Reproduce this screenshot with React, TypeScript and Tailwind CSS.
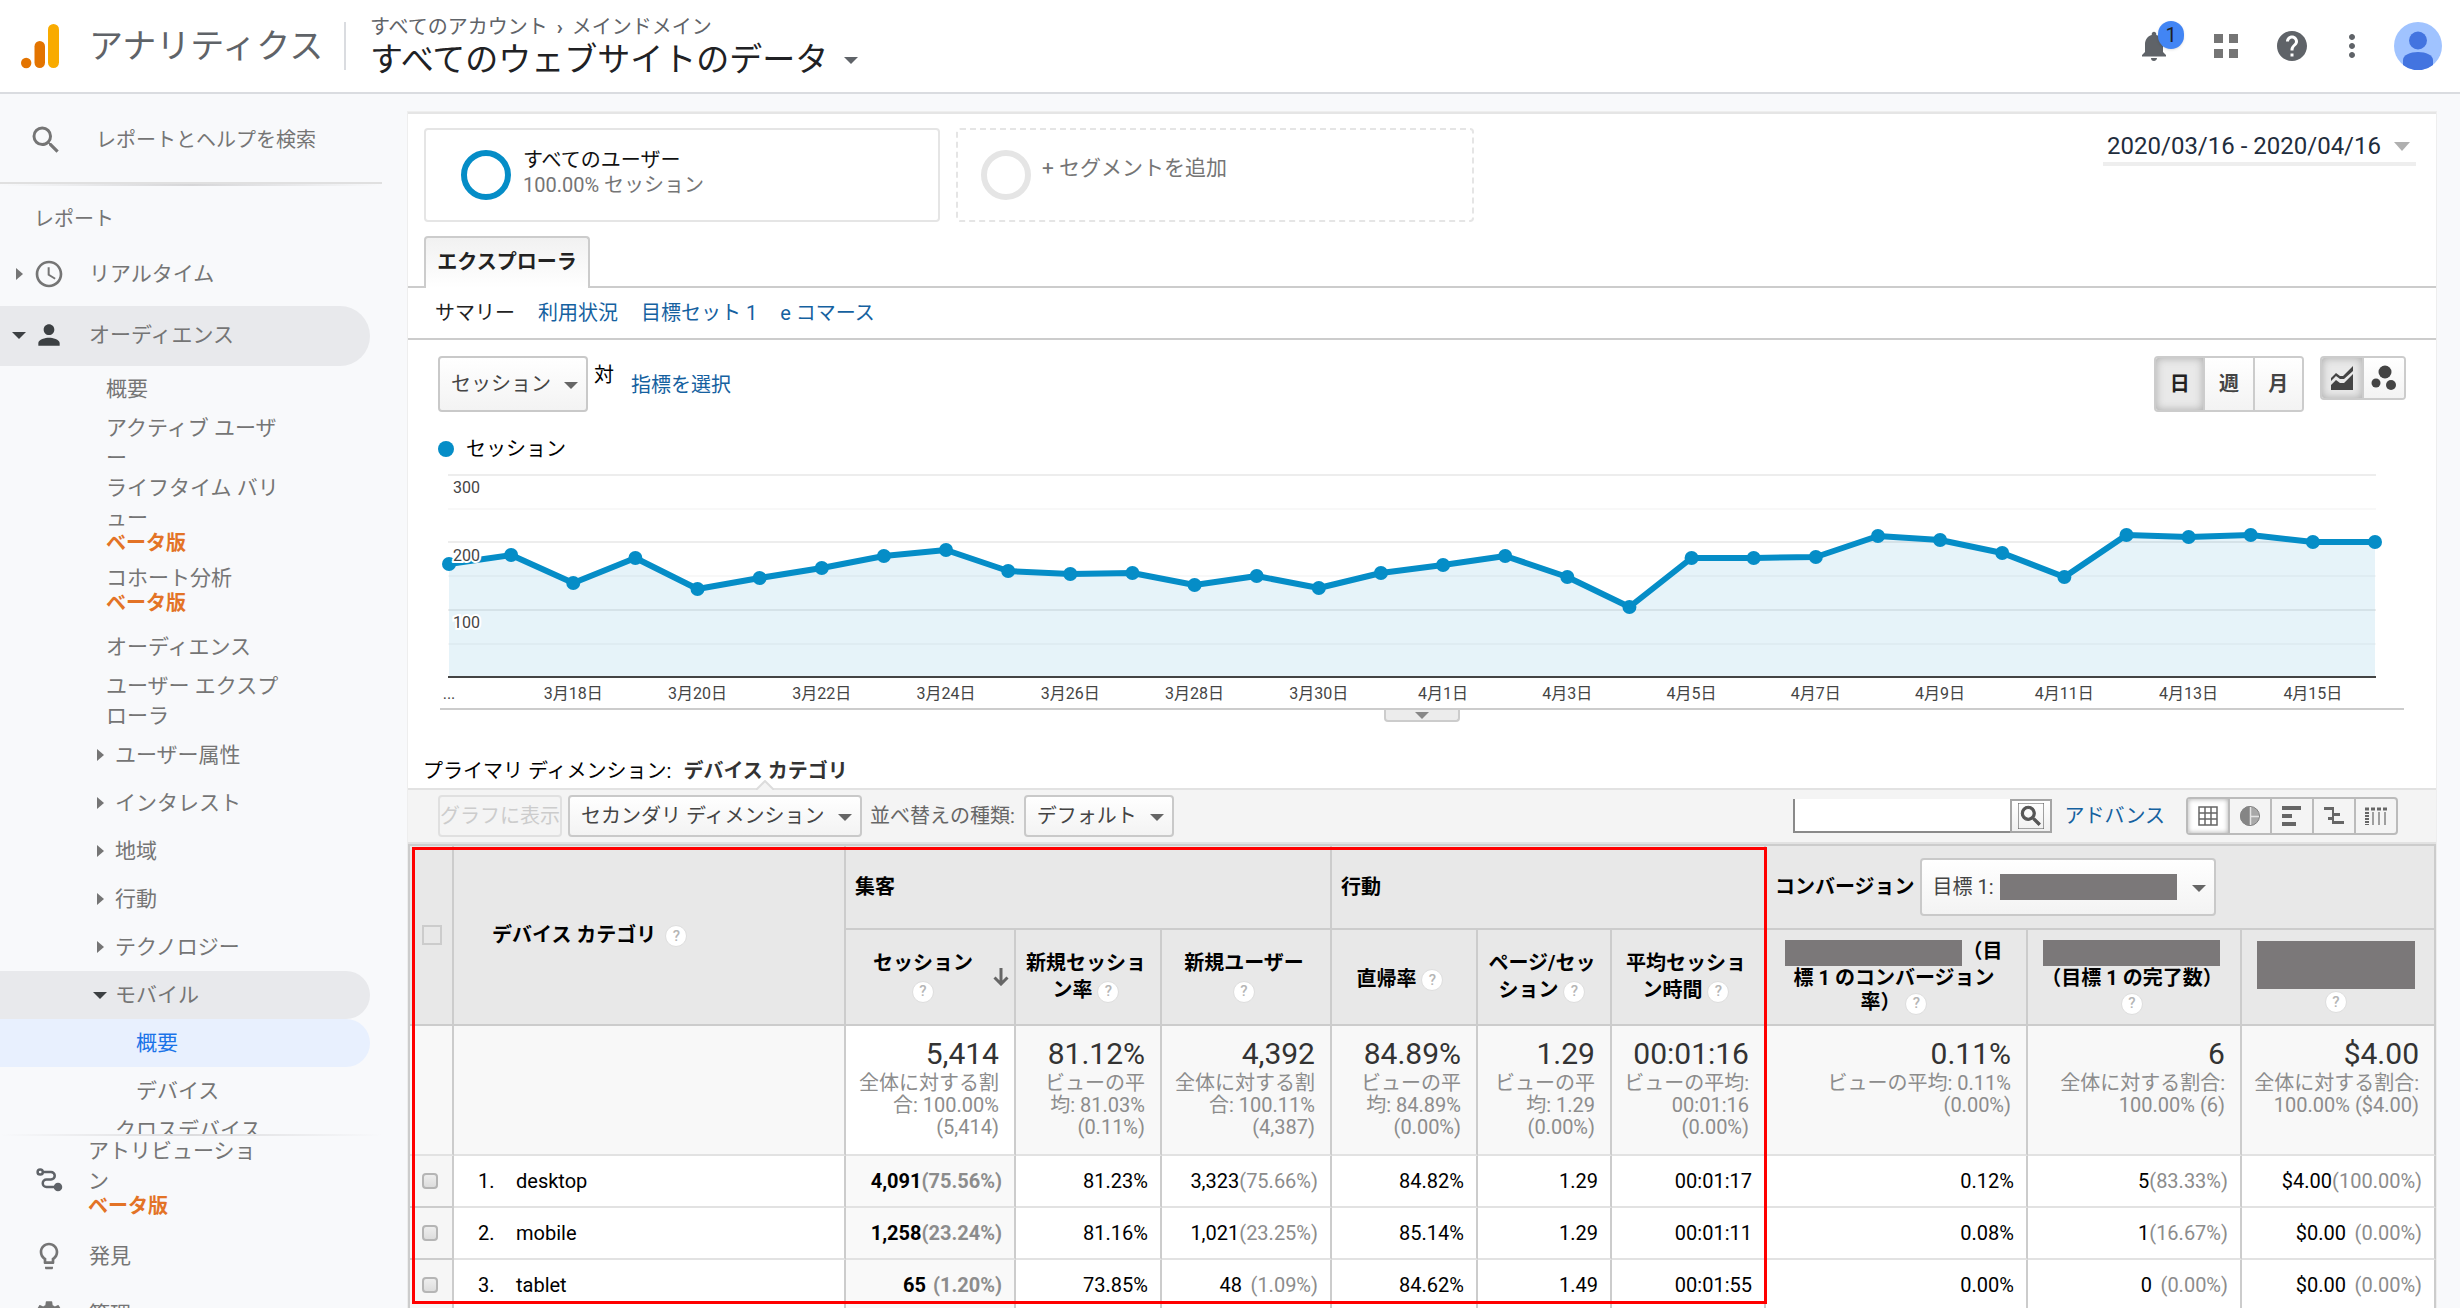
import React from "react";
import {
  MdAccessTime,
  MdHelp,
  MdLightbulbOutline,
  MdMoreVert,
  MdNotifications,
  MdPerson,
  MdSearch,
  MdSettings,
} from "react-icons/md";

const points = [
  94, 85, 113, 88, 119, 108, 98, 86, 80, 101, 104, 103, 115, 106, 118, 103, 95, 86, 107, 137, 88, 88, 87, 66, 70, 83,
  107, 65, 67, 65, 72, 72,
];

const dates = [
  "3月18日", "3月20日", "3月22日", "3月24日", "3月26日", "3月28日", "3月30日", "4月1日",
  "4月3日", "4月5日", "4月7日", "4月9日", "4月11日", "4月13日", "4月15日",
];

const summary = [
  { value: "5,414", lines: ["全体に対する割", "合: 100.00%", "(5,414)"] },
  { value: "81.12%", lines: ["ビューの平", "均: 81.03%", "(0.11%)"] },
  { value: "4,392", lines: ["全体に対する割", "合: 100.11%", "(4,387)"] },
  { value: "84.89%", lines: ["ビューの平", "均: 84.89%", "(0.00%)"] },
  { value: "1.29", lines: ["ビューの平", "均: 1.29", "(0.00%)"] },
  { value: "00:01:16", lines: ["ビューの平均:", "00:01:16", "(0.00%)"] },
  { value: "0.11%", lines: ["ビューの平均: 0.11%", "(0.00%)"] },
  { value: "6", lines: ["全体に対する割合:", "100.00% (6)"] },
  { value: "$4.00", lines: ["全体に対する割合:", "100.00% ($4.00)"] },
];

const rows = [
  {
    name: "desktop",
    cells: [["4,091", "(75.56%)"], ["81.23%"], ["3,323", "(75.66%)"], ["84.82%"], ["1.29"], ["00:01:17"], ["0.12%"], ["5", "(83.33%)"], ["$4.00", "(100.00%)"]],
  },
  {
    name: "mobile",
    cells: [["1,258", "(23.24%)"], ["81.16%"], ["1,021", "(23.25%)"], ["85.14%"], ["1.29"], ["00:01:11"], ["0.08%"], ["1", "(16.67%)"], ["$0.00", "(0.00%)"]],
  },
  {
    name: "tablet",
    cells: [["65", "(1.20%)"], ["73.85%"], ["48", "(1.09%)"], ["84.62%"], ["1.49"], ["00:01:55"], ["0.00%"], ["0", "(0.00%)"], ["$0.00", "(0.00%)"]],
  },
];

function CaretDown({ className = "" }: { className?: string }) {
  return (
    <svg viewBox="0 0 14 7" className={`h-[7px] w-[14px] shrink-0 ${className}`} fill="currentColor" aria-hidden="true">
      <path d="M0 0h14L7 7z" />
    </svg>
  );
}

function CaretRight({ className = "" }: { className?: string }) {
  return (
    <svg viewBox="0 0 7 12" className={`h-3 w-[7px] shrink-0 ${className}`} fill="currentColor" aria-hidden="true">
      <path d="M0 0v12l7-6z" />
    </svg>
  );
}

function Help() {
  return (
    <button
      type="button"
      aria-label="ヘルプ"
      className="inline-flex size-[22px] items-center justify-center rounded-full border border-[#dedede] bg-white align-middle text-[15px] leading-none font-medium text-[#b5b5b5]"
    >
      ?
    </button>
  );
}

function Dropdown({ label, text, className }: { label: string; text: string; className: string }) {
  return (
    <div className={`relative shrink-0 ${className}`}>
      <select
        aria-label={label}
        className="size-full appearance-none rounded border-2 border-[#c9c9c9] bg-linear-to-b from-white to-[#f3f3f3] pl-[11px] text-[20px] text-[#444]"
      >
        <option>{text}</option>
      </select>
      <CaretDown className="pointer-events-none absolute top-1/2 right-[10px] -mt-[2px] text-[#666]" />
    </div>
  );
}

function Beta() {
  return <span className="block text-[20px] leading-5 font-bold text-[#e37326]">ベータ版</span>;
}

function Header() {
  return (
    <header className="flex h-[94px] shrink-0 items-center border-b-2 border-[#dadce0] bg-white pr-[18px] pl-5">
      <svg viewBox="0 0 40 46" className="h-[46px] w-10" aria-hidden="true">
        <rect x="28" y="1" width="11" height="44" rx="5.5" fill="#f9ab00" />
        <rect x="14.500" y="18" width="10.500" height="27" rx="5.250" fill="#e37400" />
        <circle cx="6.200" cy="40" r="5.200" fill="#e37400" />
      </svg>
      <span className="ml-[29px] w-[255px] text-[34px] text-[#5f6368]">アナリティクス</span>
      <div className="flex h-12 flex-col justify-center border-l-2 border-[#dadce0] pl-6">
        <div className="text-[20px] leading-7 text-[#5f6368]">
          すべてのアカウント<span className="mx-[9px] font-bold">›</span>メインドメイン
        </div>
        <button type="button" className="flex items-center gap-4 text-[33px] leading-[38px] text-[#202124]">
          すべてのウェブサイトのデータ
          <CaretDown className="text-[#5f6368]" />
        </button>
      </div>

      <div className="ml-auto flex items-center text-[#5f6368]">
        <button type="button" aria-label="通知" className="relative">
          <MdNotifications className="size-9" />
          <span className="absolute -top-[7px] left-[22px] flex h-7 w-[26px] items-center justify-center rounded-full bg-[#4285f4] text-[20px] text-[#202124] shadow">
            1
          </span>
        </button>
        <button type="button" aria-label="アプリ" className="ml-[42px] text-[#757575]">
          <svg viewBox="0 0 24 24" className="size-6" fill="currentColor" aria-hidden="true">
            <path d="M0 0h9v9H0zM15 0h9v9h-9zM0 15h9v9H0zM15 15h9v9h-9z" />
          </svg>
        </button>
        <button type="button" aria-label="ヘルプ" className="ml-9">
          <MdHelp className="size-9" />
        </button>
        <button type="button" aria-label="その他" className="ml-6">
          <MdMoreVert className="size-9" />
        </button>
        <button type="button" aria-label="アカウント" className="ml-6">
          <svg viewBox="0 0 48 48" className="size-12" aria-hidden="true">
            <circle cx="24" cy="24" r="24" fill="#a0c3ff" />
            <circle cx="24" cy="18.500" r="9" fill="#4374e0" />
            <path d="M9 43v-5c0-5 7-8 15-8s15 3 15 8v5a24 24 0 0 1-30 0z" fill="#4374e0" />
          </svg>
        </button>
      </div>
    </header>
  );
}

function Sidebar() {
  const groups = ["ユーザー属性", "インタレスト", "地域", "行動", "テクノロジー"];
  return (
    <aside className="flex w-[408px] shrink-0 flex-col text-[21px] leading-[30px] text-[#757575]">
      <div className="flex min-h-0 flex-1 flex-col overflow-hidden">
        <label className="flex h-[88px] shrink-0 items-center pt-[3px] pl-7">
          <MdSearch className="size-9" />
          <input
            type="text"
            aria-label="レポートとヘルプを検索"
            placeholder="レポートとヘルプを検索"
            className="ml-8 w-[240px] bg-transparent text-[20px] placeholder:text-[#757575]"
          />
        </label>
        <div className="h-1 w-[382px] shrink-0 border-t-2 border-[#e0e0e0] bg-linear-to-r from-transparent via-[#d6d6d8] to-transparent" />
        <div className="flex h-[58px] shrink-0 items-center pt-2 pl-[34px] text-[20px]">レポート</div>
        <a href="#realtime" className="flex h-[60px] shrink-0 items-center pl-4">
          <CaretRight />
          <MdAccessTime className="ml-[10px] size-8" />
          <span className="ml-6">リアルタイム</span>
        </a>
        <a href="#audience" className="mt-[2px] flex h-[60px] w-[370px] shrink-0 items-center rounded-r-full bg-[#e8e9ec] pb-[2px] pl-3">
          <CaretDown className="text-[#3c4043]" />
          <MdPerson className="ml-[7px] size-8 text-[#3c4043]" />
          <span className="ml-6">オーディエンス</span>
        </a>
        <nav className="flex flex-col">
          <div className="flex w-[290px] flex-col pl-[106px]">
            <a href="#overview" className="flex h-[47px] items-center pb-[2px]">概要</a>
            <a href="#active" className="block">アクティブ ユーザ<br />ー</a>
            <a href="#ltv" className="block">ライフタイム バリ<br />ュー<Beta /></a>
            <a href="#cohort" className="mt-[10px] block">コホート分析<Beta /></a>
            <a href="#audiences" className="mt-[10px] flex h-12 items-center">オーディエンス</a>
            <a href="#explorer" className="block">ユーザー エクスプ<br />ローラ</a>
          </div>
          {groups.map((g) => (
            <a key={g} href="#group" className="flex h-12 items-center gap-[11px] pl-[97px]">
              <CaretRight />
              {g}
            </a>
          ))}
          <a href="#mobile" className="flex h-12 w-[370px] items-center gap-2 rounded-r-full bg-[#e8e9ec] pl-[93px]">
            <CaretDown className="text-[#3c4043]" />
            モバイル
          </a>
          <a href="#mobile-overview" className="flex h-12 w-[370px] items-center rounded-r-full bg-[#e8f0fe] pl-[136px] text-[#1a73e8]">
            概要
          </a>
          <a href="#devices" className="flex h-12 items-center pl-[136px]">デバイス</a>
          <a href="#cross-device" className="block pl-[115px]">クロスデバイス</a>
        </nav>
      </div>

      <div className="h-[174px] shrink-0 overflow-hidden">
        <div className="h-[2px] w-[382px] bg-linear-to-r from-transparent via-[#dcdcde] to-transparent" />
        <a href="#attribution" className="flex items-center pl-9">
          <svg viewBox="0 0 28 26" className="mt-2 h-[26px] w-7 text-[#5f6368]" fill="none" stroke="currentColor" strokeWidth="2.500" aria-hidden="true">
            <circle cx="4.200" cy="5" r="2.600" />
            <path d="M7 5h8a3.700 3.700 0 0 1 0 7.500h-4.500a3.700 3.700 0 0 0 0 7.500H20" />
            <circle cx="22" cy="20" r="3" fill="currentColor" />
          </svg>
          <span className="ml-6">アトリビューショ<br />ン<Beta /></span>
        </a>
        <a href="#discover" className="flex h-20 items-center pl-[33px]">
          <MdLightbulbOutline className="size-8" />
          <span className="ml-6">発見</span>
        </a>
        <a href="#admin" className="flex h-9 items-center pl-[33px]">
          <MdSettings className="size-8" />
          <span className="ml-6">管理</span>
        </a>
      </div>
    </aside>
  );
}

function Segments() {
  return (
    <div className="flex items-start pt-[14px] pl-4">
      <button type="button" className="flex h-[94px] w-[516px] items-center rounded border-2 border-[#e5e5e5] pl-[35px] text-left text-[20px]">
        <span className="size-[50px] rounded-full border-[6px] border-[#058dc7]" />
        <span className="mb-1 ml-3 leading-[25px] text-[#111]">
          すべてのユーザー
          <span className="block text-[#757575]">100.00% セッション</span>
        </span>
      </button>
      <button type="button" className="ml-4 flex h-[94px] w-[518px] items-center rounded border-2 border-dashed border-[#e5e5e5] pl-[23px] text-[21px] text-[#757575]">
        <span className="size-[50px] rounded-full border-[6px] border-[#e5e5e5]" />
        <span className="mb-3 ml-[11px]">+ セグメントを追加</span>
      </button>
      <button type="button" className="mr-5 ml-auto flex h-[38px] items-center border-b-4 border-[#eee] pt-[2px] pl-1 text-[24px] text-[#1f2d3d]">
        2020/03/16 - 2020/04/16
        <svg viewBox="0 0 16 9" className="mr-[6px] ml-[13px] h-[9px] w-4" fill="#b0b0b0" aria-hidden="true">
          <path d="M0 0h16L8 9z" />
        </svg>
      </button>
    </div>
  );
}

function Chart() {
  const step = 1926 / 31;
  const x = (i: number) => 9 + i * step;
  const line = points.map((p, i) => `${x(i)},${p}`).join(" ");
  return (
    <svg viewBox="0 0 1964 238" className="mt-[9px] block w-full" fontSize="16" fill="#444" role="img" aria-label="セッション">
      <path d="M8 5h1928M8 72h1928M8 140h1928" stroke="#ededed" strokeWidth="2" />
      <path d="M8 39h1928M8 106h1928M8 174h1928" stroke="#f8f8f8" strokeWidth="2" />
      <polygon points={`9,208 ${line} 1935,208`} fill="#058dc7" fillOpacity="0.1" />
      <path d="M8 207h1928" stroke="#444" strokeWidth="2" />
      <polyline points={line} fill="none" stroke="#058dc7" strokeWidth="6" strokeLinejoin="round" />
      {points.map((p, i) => (
        <circle key={i} cx={x(i)} cy={p} r="7" fill="#058dc7" />
      ))}
      <g stroke="#fff" strokeWidth="4" paintOrder="stroke">
        <text x="13" y="23">300</text>
        <text x="13" y="91">200</text>
        <text x="13" y="158">100</text>
      </g>
      <text x="9" y="229" textAnchor="middle">...</text>
      {dates.map((d, i) => (
        <text key={d} x={x(2 * i + 2)} y="229" textAnchor="middle">{d}</text>
      ))}
    </svg>
  );
}

function Explorer() {
  return (
    <section>
      <div className="mt-[14px] flex border-b-2 border-[#ccc] pl-4">
        <button
          type="button"
          className="-mb-[2px] h-[52px] w-[166px] rounded-t border-2 border-b-0 border-[#ccc] bg-linear-to-b from-[#f1f1f1] to-white pb-[2px] text-[20px] font-bold text-[#222]"
        >
          エクスプローラ
        </button>
      </div>
      <nav className="flex h-[52px] items-center gap-[23px] border-b-2 border-[#ccc] pl-[27px] text-[20px] text-[#15619f]">
        <span className="text-[#222]">サマリー</span>
        <a href="#usage">利用状況</a>
        <a href="#goals">目標セット 1</a>
        <a href="#ecommerce">e コマース</a>
      </nav>

      <div className="flex items-start pt-4 pr-[30px] pl-[30px] text-[20px]">
        <Dropdown label="指標" text="セッション" className="h-14 w-[150px]" />
        <span className="mt-1 ml-[6px] leading-[30px]">対</span>
        <a href="#metric" className="mt-[14px] ml-[17px] leading-[30px] text-[#15619f]">指標を選択</a>
        <div className="ml-auto flex h-14 w-[150px] overflow-hidden rounded border-2 border-[#ccc] font-bold text-[#444]">
          <button type="button" className="flex-1 bg-[#e9e9e9] text-[#222] shadow-[inset_0_0_8px_#aaa]">日</button>
          <button type="button" className="flex-1 border-x-2 border-[#ccc] bg-linear-to-b from-white to-[#f3f3f3]">週</button>
          <button type="button" className="flex-1 bg-linear-to-b from-white to-[#f3f3f3]">月</button>
        </div>
        <div className="ml-4 flex h-11 w-[86px] overflow-hidden rounded border-2 border-[#ccc] text-[#444]">
          <button type="button" aria-label="折れ線グラフ" className="flex flex-1 items-center justify-center border-r-2 border-[#ccc] bg-[#e9e9e9] shadow-[inset_0_0_8px_#aaa]">
            <svg viewBox="0 0 22 24" className="h-6 w-[22px]" fill="currentColor" aria-hidden="true">
              <path d="M0 24v-5l5-5 4 3 4 0 9-9v16z" />
              <path d="M0 15v-3l5-5 4 3h3L22 0v5l-9 8H9l-4-3z" />
            </svg>
          </button>
          <button type="button" aria-label="モーション グラフ" className="flex flex-1 items-center justify-center bg-linear-to-b from-white to-[#f3f3f3]">
            <svg viewBox="0 0 26 26" className="size-[26px]" fill="currentColor" aria-hidden="true">
              <circle cx="14" cy="7" r="6.500" />
              <circle cx="5" cy="18" r="4.500" />
              <circle cx="20" cy="20" r="5" />
            </svg>
          </button>
        </div>
      </div>

      <div className="px-8">
        <div className="mt-[25px] flex h-6 items-center gap-3 text-[20px]">
          <span className="-ml-[2px] size-4 rounded-full bg-[#058dc7]" />
          セッション
        </div>
        <Chart />
        <div className="flex h-4 items-start justify-center border-t-2 border-[#ccc]">
          <button type="button" aria-label="グラフの注釈" className="flex h-3 w-[76px] items-center justify-center rounded-b-sm border-2 border-t-0 border-[#ccc] bg-[#ececec] text-[#888]">
            <CaretDown />
          </button>
        </div>
      </div>
    </section>
  );
}

function ViewButtons() {
  return (
    <div className="mr-[38px] flex h-[38px] overflow-hidden rounded-sm border-2 border-[#bbb] text-[#666]">
      <button type="button" aria-label="データ" className="flex w-10 items-center justify-center bg-white shadow-[inset_0_0_5px_#aaa]">
        <svg viewBox="0 0 20 20" className="size-5" fill="none" stroke="currentColor" strokeWidth="1.500" aria-hidden="true">
          <path d="M1 1h18v18H1zM7 1v18M13 1v18M1 7h18M1 13h18" />
        </svg>
      </button>
      <button type="button" aria-label="割合" className="flex w-[42px] items-center justify-center border-l-2 border-[#bbb]">
        <svg viewBox="0 0 20 20" className="size-5" aria-hidden="true">
          <circle cx="10" cy="10" r="9.500" fill="#a8a8a8" stroke="#7d7d7d" />
          <path d="M10 0a10 10 0 0 0 0 20z" fill="#858585" />
          <path d="M10.500 1v18M10.500 10.500H19" stroke="#e4e4e4" strokeWidth="1.500" />
        </svg>
      </button>
      <button type="button" aria-label="パフォーマンス" className="flex w-[42px] items-center justify-center border-l-2 border-[#bbb]">
        <svg viewBox="0 0 20 20" className="size-5" fill="currentColor" aria-hidden="true">
          <path d="M0 0h19v4H0zM0 8h10v4H0zM0 16h14v4H0z" />
        </svg>
      </button>
      <button type="button" aria-label="比較" className="flex w-[42px] items-center justify-center border-l-2 border-[#bbb]">
        <svg viewBox="0 0 20 20" className="size-5" fill="currentColor" aria-hidden="true">
          <path d="M0 1h10v3H0zM8 1h2v17H8zM10 7h6v3h-6zM4 11h5v3H4zM10 15h10v3H10z" />
        </svg>
      </button>
      <button type="button" aria-label="ピボット" className="flex w-[42px] items-center justify-center border-l-2 border-[#bbb]">
        <svg viewBox="0 0 22 18" className="h-[18px] w-[22px]" fill="none" stroke="currentColor" aria-hidden="true">
          <path d="M0 2h22" strokeWidth="3" strokeDasharray="4 2" />
          <path d="M2 5v13" strokeWidth="4" strokeDasharray="2 1" />
          <path d="M8 5v13M14 5v13M20 5v13" strokeWidth="2" opacity="0.6" />
        </svg>
      </button>
    </div>
  );
}

function Toolbar() {
  return (
    <>
      <div className="mt-[33px] pl-[15px] text-[20px] leading-7">
        プライマリ ディメンション:<span className="ml-3 font-bold text-[#333]">デバイス カテゴリ</span>
      </div>
      <div className="relative mt-[3px] flex h-14 items-center border-y-2 border-[#e2e2e2] bg-[#f4f4f4] pl-[30px] text-[20px]">
        <svg viewBox="0 0 18 10" className="absolute -top-[10px] left-[348px] h-[10px] w-[18px]" fill="#f4f4f4" stroke="#dcdcdc" strokeWidth="2" aria-hidden="true">
          <path d="M0 10l9-9 9 9" />
        </svg>
        <button type="button" disabled className="h-[42px] w-[124px] rounded border-2 border-[#e0e0e0] whitespace-nowrap text-[#ccc]">
          グラフに表示
        </button>
        <Dropdown label="セカンダリ ディメンション" text="セカンダリ ディメンション" className="ml-[6px] h-[42px] w-[294px]" />
        <label className="ml-2 text-[#666]">並べ替えの種類:</label>
        <Dropdown label="並べ替えの種類" text="デフォルト" className="ml-[9px] h-[42px] w-[150px]" />
        <div className="ml-auto flex h-[34px]">
          <input type="text" aria-label="検索" className="w-[217px] border-b-2 border-l-2 border-[#8a8a8a] bg-white px-2" />
          <button type="button" aria-label="検索" className="flex w-[42px] items-center justify-center border-2 border-[#a5a5a5] bg-linear-to-b from-white to-[#f0f0f0] text-[#555]">
            <MdSearch className="size-[26px] stroke-current stroke-1" />
          </button>
        </div>
        <a href="#advanced" className="mr-[21px] ml-3 text-[#15619f]">アドバンス</a>
        <ViewButtons />
      </div>
    </>
  );
}

function Mask({ className }: { className: string }) {
  return <span className={`inline-block bg-[#7b7879] align-middle ${className}`} />;
}

function DataTable() {
  const th = "border-r-2 border-b-2 border-[#ccc] font-bold";
  return (
    <div className="relative">
      <table className="w-full table-fixed border-separate border-spacing-0 border-t-2 border-l-2 border-[#ccc] text-[20px] text-black">
        <colgroup>
          <col className="w-11" />
          <col />
          <col className="w-[170px]" />
          <col className="w-[146px]" />
          <col className="w-[170px]" />
          <col className="w-[146px]" />
          <col className="w-[134px]" />
          <col className="w-[154px]" />
          <col className="w-[262px]" />
          <col className="w-[214px]" />
          <col className="w-[194px]" />
        </colgroup>
        <thead className="bg-[#e8e8e8] leading-[27px]">
          <tr className="h-[84px] text-left">
            <th rowSpan={2} className={`${th} pl-3`}>
              <input type="checkbox" aria-label="すべて選択" className="block size-5 appearance-none border-2 border-[#ccc]" />
            </th>
            <th rowSpan={2} className={`${th} pl-[38px]`}>
              デバイス カテゴリ <span className="ml-1"><Help /></span>
            </th>
            <th colSpan={3} className={`${th} pl-[9px]`}>集客</th>
            <th colSpan={3} className={`${th} pl-[9px]`}>行動</th>
            <th colSpan={3} className={`${th} pl-[9px]`}>
              <div className="flex items-center gap-[5px]">
                コンバージョン
                <div className="relative font-normal">
                  <Dropdown label="目標" text="目標 1:" className="h-[58px] w-[296px]" />
                  <Mask className="absolute top-4 left-20 h-[26px] w-[177px]" />
                </div>
              </div>
            </th>
          </tr>
          <tr className="h-24 text-center">
            <th className={th}>
              <div className="flex items-center justify-end pr-[5px]">
                <span className="mr-5">セッション<br /><Help /></span>
                <svg viewBox="0 0 16 18" className="h-[18px] w-4" fill="none" stroke="#666" strokeWidth="3" aria-hidden="true">
                  <path d="M8 0v16M1.500 9.500L8 16l6.500-6.500" />
                </svg>
              </div>
            </th>
            <th className={`${th} pr-1`}>新規セッショ<br />ン率 <Help /></th>
            <th className={`${th} pr-1`}>新規ユーザー<br /><Help /></th>
            <th className={`${th} pt-1 pr-2`}>直帰率 <Help /></th>
            <th className={`${th} pr-1`}>ページ/セッ<br />ション <Help /></th>
            <th className={`${th} pr-1`}>平均セッショ<br />ン時間 <Help /></th>
            <th className={`${th} pr-1 leading-6`}>
              <Mask className="h-[26px] w-[177px]" />（目<br />標 1 のコンバージョン<br />率） <Help />
            </th>
            <th className={`${th} pr-1 leading-6`}>
              <Mask className="h-[26px] w-[177px]" /><br />（目標 1 の完了数）<br /><Help />
            </th>
            <th className={`${th} pr-1 leading-6`}>
              <Mask className="h-12 w-[158px]" /><br /><Help />
            </th>
          </tr>
        </thead>
        <tbody>
          <tr className="h-[130px] bg-[#f8f8f8] text-right align-top">
            <td className="border-r-2 border-b-2 border-[#ccc] border-b-[#e2e2e2]" />
            <td className="border-r-2 border-b-2 border-[#ccc] border-b-[#e2e2e2]" />
            {summary.map((s, i) => (
              <td key={i} className="border-r-2 border-b-2 border-[#ccc] border-b-[#e2e2e2] pt-[10px] pr-[15px] leading-[22px] whitespace-nowrap text-[#8c8c8c] nth-3:bg-white">
                <div className="text-[30px] leading-9 text-[#333]">{s.value}</div>
                {s.lines.map((l) => (
                  <div key={l}>{l}</div>
                ))}
              </td>
            ))}
          </tr>
          {rows.map((r, i) => (
            <tr key={r.name} className="h-[52px] text-right">
              <td className="border-r-2 border-b-2 border-[#ccc] bg-[#f6f6f6] pl-3">
                <input
                  type="checkbox"
                  aria-label={r.name}
                  className="block size-4 appearance-none rounded-sm border-2 border-[#b5b5b5] bg-linear-to-b from-[#eee] to-[#ddd]"
                />
              </td>
              <td className="border-r-2 border-b-2 border-[#ccc] border-b-[#e2e2e2] pl-6 text-left">
                <span className="inline-block w-[38px]">{i + 1}.</span>
                {r.name}
              </td>
              {r.cells.map(([value, share], c) => (
                <td key={c} className="border-r-2 border-b-2 border-[#ccc] border-b-[#e2e2e2] pr-3 whitespace-nowrap nth-3:bg-[#f9f9f9] nth-3:font-bold">
                  {value}
                  {share && <span className="inline-block min-w-[76px] text-[#8c8c8c]">{share}</span>}
                </td>
              ))}
            </tr>
          ))}
        </tbody>
      </table>
      {/* highlight around the acquisition and behavior columns */}
      <div className="pointer-events-none absolute top-[3px] right-[669px] left-1 h-[457px] border-[3px] border-[#f00]" />
    </div>
  );
}

export default function App() {
  return (
    <div className="flex h-screen flex-col overflow-hidden bg-[#f8f9fb] font-['Roboto','Noto_Sans_CJK_JP',sans-serif] text-black">
      <Header />
      <div className="flex min-h-0 flex-1">
        <Sidebar />
        <main className="mt-[18px] mr-6 min-w-0 flex-1 border-t-2 border-[#e5e5e5] bg-white shadow-[0_0_0_1px_#eee]">
          <Segments />
          <Explorer />
          <Toolbar />
          <DataTable />
        </main>
      </div>
    </div>
  );
}
